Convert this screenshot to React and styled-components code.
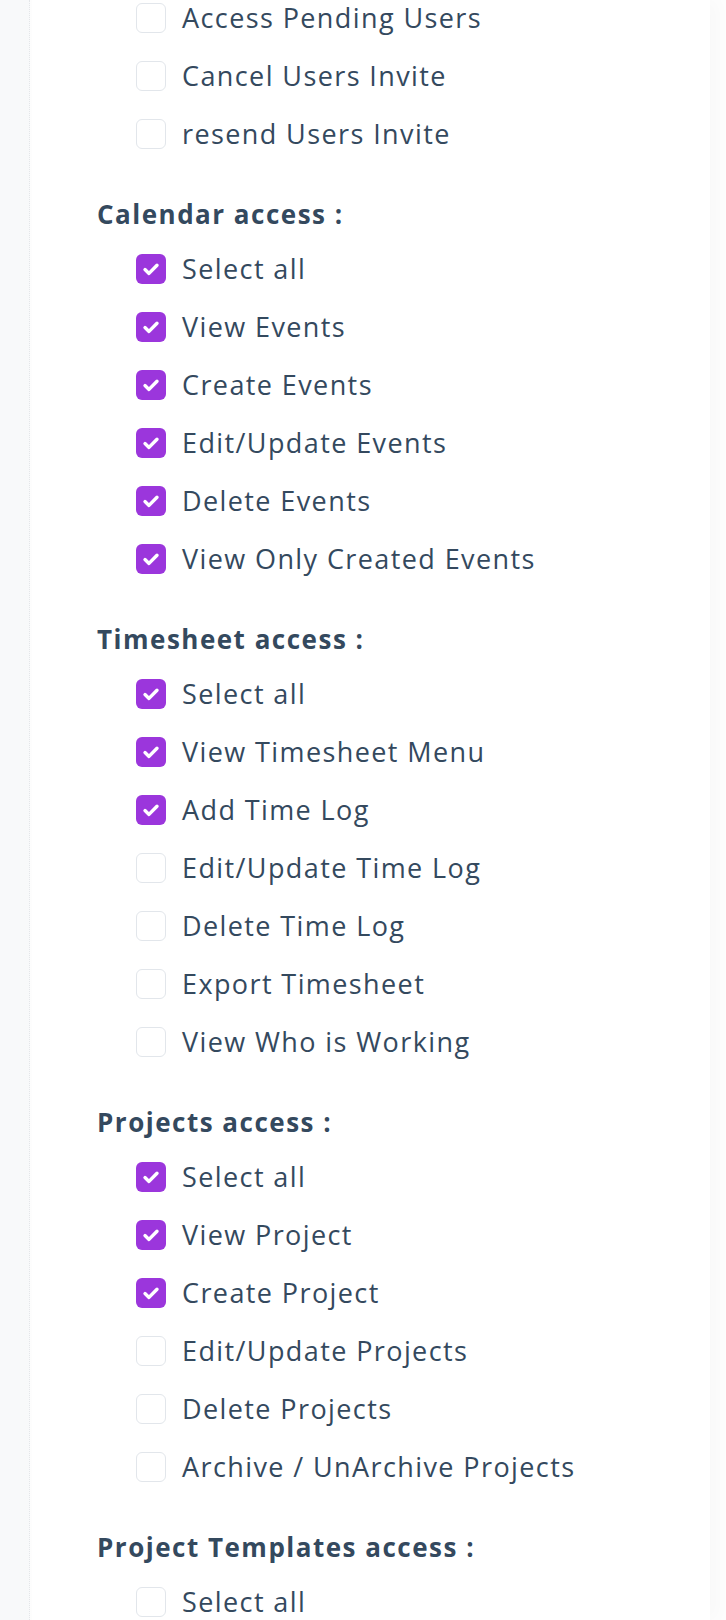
import React from 'react'
import styled, { createGlobalStyle } from 'styled-components'

const GlobalStyle = createGlobalStyle`
  html, body {
    margin: 0;
    padding: 0;
    background: #ffffff;
  }
  body {
    font-family: 'Open Sans', 'Noto Sans', sans-serif;
    color: #34495e;
  }
`

const Page = styled.div`
  display: flex;
  min-height: 1620px;
  background: #fdfdfd;
`

const Rail = styled.div`
  width: 29px;
  flex-shrink: 0;
  background: #f8f9fa;
  border-right: 1px dotted #e4e6e9;
  margin-right: 2px;
`

const Card = styled.div`
  flex: 1;
  margin-right: 16px;
  background: #ffffff;
  box-shadow: 8px 0 16px rgba(0, 0, 0, 0.018);
  padding: 3px 0 0 65px;
  display: flex;
  flex-direction: column;
  gap: 50px;
`

const Group = styled.section`
  display: flex;
  flex-direction: column;
`

const Heading = styled.h3`
  margin: 0 0 25px;
  height: 30px;
  line-height: 30px;
  font-size: 26px;
  font-weight: 700;
  color: #34495e;
  letter-spacing: 1.5px;
  white-space: nowrap;
`

const List = styled.ul`
  list-style: none;
  margin: 0;
  padding: 0 0 0 39px;
  display: flex;
  flex-direction: column;
  gap: 28px;
`

const Row = styled.li`
  display: flex;
  align-items: center;
  gap: 16px;
  height: 30px;
`

const Box = styled.span`
  width: 30px;
  height: 30px;
  box-sizing: border-box;
  border-radius: 6px;
  flex-shrink: 0;
  display: flex;
  align-items: center;
  justify-content: center;
  background: ${({ $checked }) => ($checked ? '#9b36dc' : '#ffffff')};
  border: ${({ $checked }) => ($checked ? 'none' : '1.5px solid #e2e6eb')};
`

const Label = styled.span`
  font-size: 27px;
  line-height: 30px;
  letter-spacing: 1.4px;
  color: #34495e;
  white-space: nowrap;
`

const Check = () => (
  <svg width="30" height="30" viewBox="0 0 30 30">
    <path
      d="M9 15.6 L13 19.4 L21 11.2"
      fill="none"
      stroke="#ffffff"
      strokeWidth="3.4"
      strokeLinecap="round"
      strokeLinejoin="round"
    />
  </svg>
)

const groups = [
  {
    title: null,
    items: [
      ['Access Pending Users', false],
      ['Cancel Users Invite', false],
      ['resend Users Invite', false],
    ],
  },
  {
    title: 'Calendar access :',
    items: [
      ['Select all', true],
      ['View Events', true],
      ['Create Events', true],
      ['Edit/Update Events', true],
      ['Delete Events', true],
      ['View Only Created Events', true],
    ],
  },
  {
    title: 'Timesheet access :',
    items: [
      ['Select all', true],
      ['View Timesheet Menu', true],
      ['Add Time Log', true],
      ['Edit/Update Time Log', false],
      ['Delete Time Log', false],
      ['Export Timesheet', false],
      ['View Who is Working', false],
    ],
  },
  {
    title: 'Projects access :',
    items: [
      ['Select all', true],
      ['View Project', true],
      ['Create Project', true],
      ['Edit/Update Projects', false],
      ['Delete Projects', false],
      ['Archive / UnArchive Projects', false],
    ],
  },
  {
    title: 'Project Templates access :',
    items: [['Select all', false]],
  },
]

export default function App() {
  return (
    <>
      <GlobalStyle />
      <Page>
        <Rail />
        <Card>
          {groups.map((g, i) => (
            <Group key={i}>
              {g.title && <Heading>{g.title}</Heading>}
              <List>
                {g.items.map(([label, checked]) => (
                  <Row key={label}>
                    <Box $checked={checked}>{checked && <Check />}</Box>
                    <Label>{label}</Label>
                  </Row>
                ))}
              </List>
            </Group>
          ))}
        </Card>
      </Page>
    </>
  )
}
